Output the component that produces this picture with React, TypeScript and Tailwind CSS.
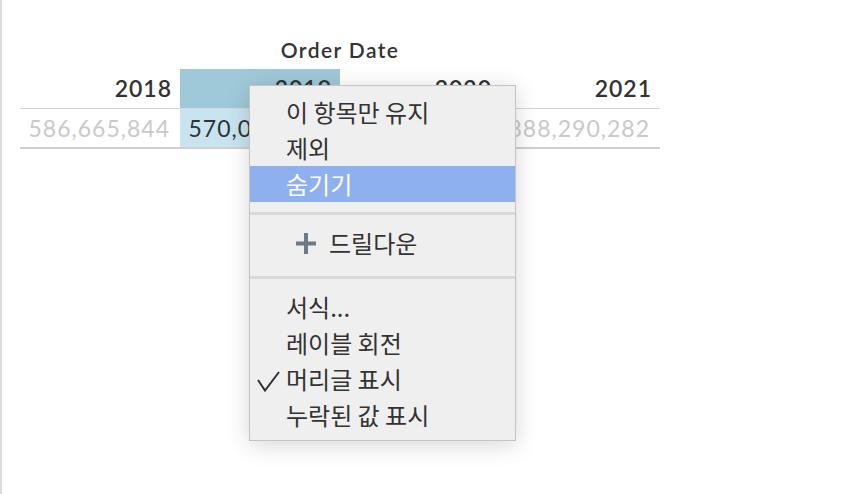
import React from "react";

const years = [
  { year: "2018", value: "586,665,844", active: false },
  { year: "2019", value: "570,048,306", active: true },
  { year: "2020", value: "733,215,255", active: false },
  { year: "2021", value: "888,290,282", active: false },
];

const topItems = ["이 항목만 유지", "제외"];
const bottomItems = [
  { label: "서식...", checked: false },
  { label: "레이블 회전", checked: false },
  { label: "머리글 표시", checked: true },
  { label: "누락된 값 표시", checked: false },
];

const latin = "font-['Lato','Noto_Sans',sans-serif]";
const korean = "font-['Noto_Sans_CJK_KR','Noto_Sans',sans-serif]";

function ContextMenu() {
  return (
    <div
      className={`absolute left-[247px] top-[85px] w-[267px] border border-[#c4c4c4] bg-[#efefef] pb-[7px] pt-[8px] text-[24px] leading-none text-[#333] shadow-[0_4px_22px_rgba(0,0,0,0.16)] ${korean}`}
    >
      {topItems.map((item) => (
        <div key={item} className="flex h-[36px] items-center pl-[36px]">
          {item}
        </div>
      ))}
      <div className="flex h-[36px] items-center bg-[#8fb0ef] pl-[36px] text-white">숨기기</div>

      <div className="my-[10px] h-[3px] bg-[#d9d9d9]" />

      <div className="flex h-[36px] items-center pl-[46px]">
        <svg width="20" height="21" viewBox="0 0 20 21" className="mr-[13px]">
          <rect x="8" y="0" width="4" height="21" fill="#6f7987" />
          <rect x="0" y="8.5" width="20" height="4" fill="#6f7987" />
        </svg>
        드릴다운
      </div>

      <div className="mb-[10px] mt-[15px] h-[3px] bg-[#d9d9d9]" />

      {bottomItems.map((item) => (
        <div key={item.label} className="relative flex h-[36px] items-center pl-[36px]">
          {item.checked ? (
            <svg width="23" height="21" viewBox="0 0 23 21" className="absolute left-[7px] top-[10px]">
              <path d="M1 9 L8 19.5 L22 1" fill="none" stroke="#2f2f2f" strokeWidth="2" />
            </svg>
          ) : null}
          {item.label}
        </div>
      ))}
    </div>
  );
}

export default function App() {
  return (
    <div className="relative h-[494px] w-[862px] overflow-hidden border-l-2 border-[#dcdcdc] bg-white">
      <div className="ml-[18px] w-[640px]">
        <div
          className={`h-[69px] pt-[36px] text-center text-[21px] font-semibold leading-[28px] tracking-[1.4px] text-[#333] ${latin}`}
        >
          Order Date
        </div>
        <div className={`grid grid-cols-4 border-b border-[#d6d6d6] ${latin}`}>
          {years.map((y) => (
            <div
              key={y.year}
              className={`flex h-[39px] items-center justify-end pr-[8px] text-[23px] font-semibold tracking-[1px] text-[#333] ${
                y.active ? "bg-[#9fc9d9]" : ""
              }`}
            >
              {y.year}
            </div>
          ))}
        </div>
        <div className={`grid grid-cols-4 border-b-2 border-[#d0d0d0] ${latin}`}>
          {years.map((y) => (
            <div
              key={y.year}
              className={`flex h-[38px] items-center justify-end pr-[10px] text-[23px] tracking-[1px] ${
                y.active ? "bg-[#c8e4f0] text-[#333]" : "text-[#c9c9c9]"
              }`}
            >
              {y.value}
            </div>
          ))}
        </div>
      </div>
      <ContextMenu />
    </div>
  );
}
